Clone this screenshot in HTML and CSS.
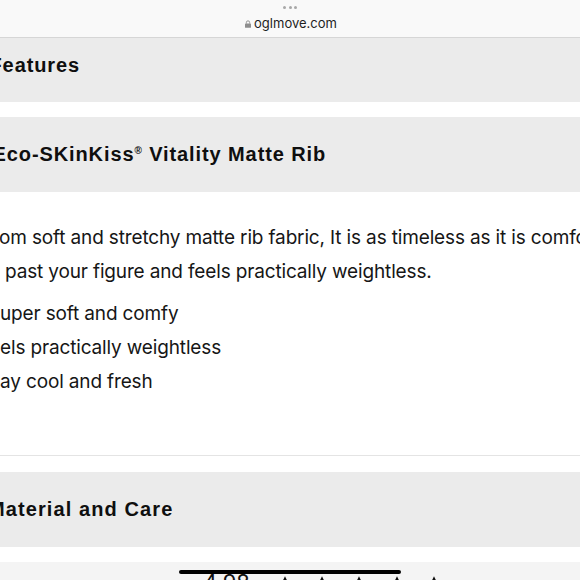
FILE: index.html
```html
<!DOCTYPE html>
<html lang="en">
<head>
<meta charset="utf-8">
<title>oglmove.com</title>
<link rel="stylesheet" href="styles.css">
</head>
<body>
<header class="bar">
  <div class="dots"><span></span><span></span><span></span></div>
  <div class="url">
    <svg class="lock" width="7" height="9" viewBox="0 0 7 9" aria-hidden="true">
      <path d="M1.6 4V2.7A1.9 1.9 0 0 1 5.4 2.7V4" fill="none" stroke="#8e8e8e" stroke-width="1.1"/>
      <rect x="0" y="4" width="7" height="5" rx="0.8" fill="#8e8e8e"/>
    </svg>
    <span>oglmove.com</span>
  </div>
</header>
<main class="page">
  <section class="acc first"><h2 class="feat">Features</h2></section>
  <section class="acc"><h2 class="eco">Eco-SKinKiss<sup>®</sup> Vitality Matte Rib</h2></section>
  <div class="content">
    <p class="desc"><span class="l1">om soft and stretchy matte rib fabric, It is as timeless as it is comfortable</span><span class="l2">past your figure and feels practically weightless.</span></p>
    <ul class="list">
      <li>uper soft and comfy</li>
      <li>els practically weightless</li>
      <li>ay cool and fresh</li>
    </ul>
  </div>
  <section class="acc"><h2 class="mat">Material and Care</h2></section>
  <div class="rating">
    <span class="score">4.98</span>
    <div class="stars">
      <svg viewBox="0 0 24 24"><path d="M12 1l3.4 7 7.6 1-5.5 5.3 1.3 7.6L12 18.3 5.2 21.9l1.3-7.6L1 9l7.6-1z"/></svg>
      <svg viewBox="0 0 24 24"><path d="M12 1l3.4 7 7.6 1-5.5 5.3 1.3 7.6L12 18.3 5.2 21.9l1.3-7.6L1 9l7.6-1z"/></svg>
      <svg viewBox="0 0 24 24"><path d="M12 1l3.4 7 7.6 1-5.5 5.3 1.3 7.6L12 18.3 5.2 21.9l1.3-7.6L1 9l7.6-1z"/></svg>
      <svg viewBox="0 0 24 24"><path d="M12 1l3.4 7 7.6 1-5.5 5.3 1.3 7.6L12 18.3 5.2 21.9l1.3-7.6L1 9l7.6-1z"/></svg>
      <svg viewBox="0 0 24 24"><path d="M12 1l3.4 7 7.6 1-5.5 5.3 1.3 7.6L12 18.3 5.2 21.9l1.3-7.6L1 9l7.6-1z"/></svg>
    </div>
  </div>
</main>
<div class="home"></div>
</body>
</html>
```

FILE: styles.css
```css
* { box-sizing: border-box; }
html, body { margin: 0; padding: 0; }
body {
  width: 580px;
  height: 580px;
  overflow: hidden;
  background: #ffffff;
  font-family: "Inter", "Liberation Sans", sans-serif;
  color: #161616;
  position: relative;
}
.bar {
  height: 38px;
  background: #f9f9f9;
  border-bottom: 1px solid #d6d6d6;
  display: flex;
  flex-direction: column;
  align-items: center;
}
.dots {
  display: flex;
  gap: 2.5px;
  padding-top: 6px;
}
.dots span {
  width: 3px;
  height: 3px;
  border-radius: 50%;
  background: #a8a8a8;
}
.url {
  display: flex;
  align-items: center;
  gap: 3px;
  margin-top: 6px;
  font-size: 13px;
  line-height: 16px;
  color: #1e1e1e;
  margin-left: 2px;
}
.lock { display: block; margin-top: 1px; width: 6px; height: 8px; }
.page {
  display: flex;
  flex-direction: column;
}
.acc {
  background: #ebebeb;
  padding: 25px 0 26px;
}
.acc.first { padding: 15px 0 25px; }
.acc + .acc { margin-top: 15px; }
.acc h2 {
  margin: 0;
  font-family: "Liberation Sans", Arial, sans-serif;
  font-weight: 700;
  font-size: 20px;
  line-height: 24px;
  color: #0f0f0f;
  white-space: nowrap;
  letter-spacing: 0.9px;
}
.acc h2.feat { margin-left: -10.5px; }
.acc h2.eco { margin-left: -7.5px; }
.acc h2.mat { margin-left: -12px; letter-spacing: 1.1px; }
.acc.last { padding: 24px 0 26px; }
.acc sup {
  font-size: 10px;
  vertical-align: 7px;
  line-height: 0;
}
.content {
  padding: 29px 0 56px;
  border-bottom: 1px solid #e4e4e4;
  margin-bottom: 16px;
  font-size: 19px;
  line-height: 34px;
  letter-spacing: -0.15px;
  white-space: nowrap;
}
.desc { margin: 0; }
.desc .l1 { display: block; margin-left: -1px; }
.desc .l2 { display: block; margin-left: 5px; }
.list {
  list-style: none;
  margin: 8px 0 0;
  padding: 0;
}
.rating {
  margin-top: 15px;
  background: #f4f4f4;
  height: 60px;
  display: flex;
  align-items: flex-start;
  padding: 7px 0 0 203px;
}
.score {
  font-size: 22px;
  line-height: 26px;
  font-weight: 400;
  color: #111;
  margin-right: 20px;
}
.stars {
  display: flex;
  gap: 7.25px;
  margin-top: 6px;
}
.stars svg {
  width: 30px;
  height: 30px;
  fill: #111;
}
.home {
  position: absolute;
  left: 179px;
  top: 570px;
  width: 222px;
  height: 3.5px;
  border-radius: 2px;
  background: #000;
}
```
